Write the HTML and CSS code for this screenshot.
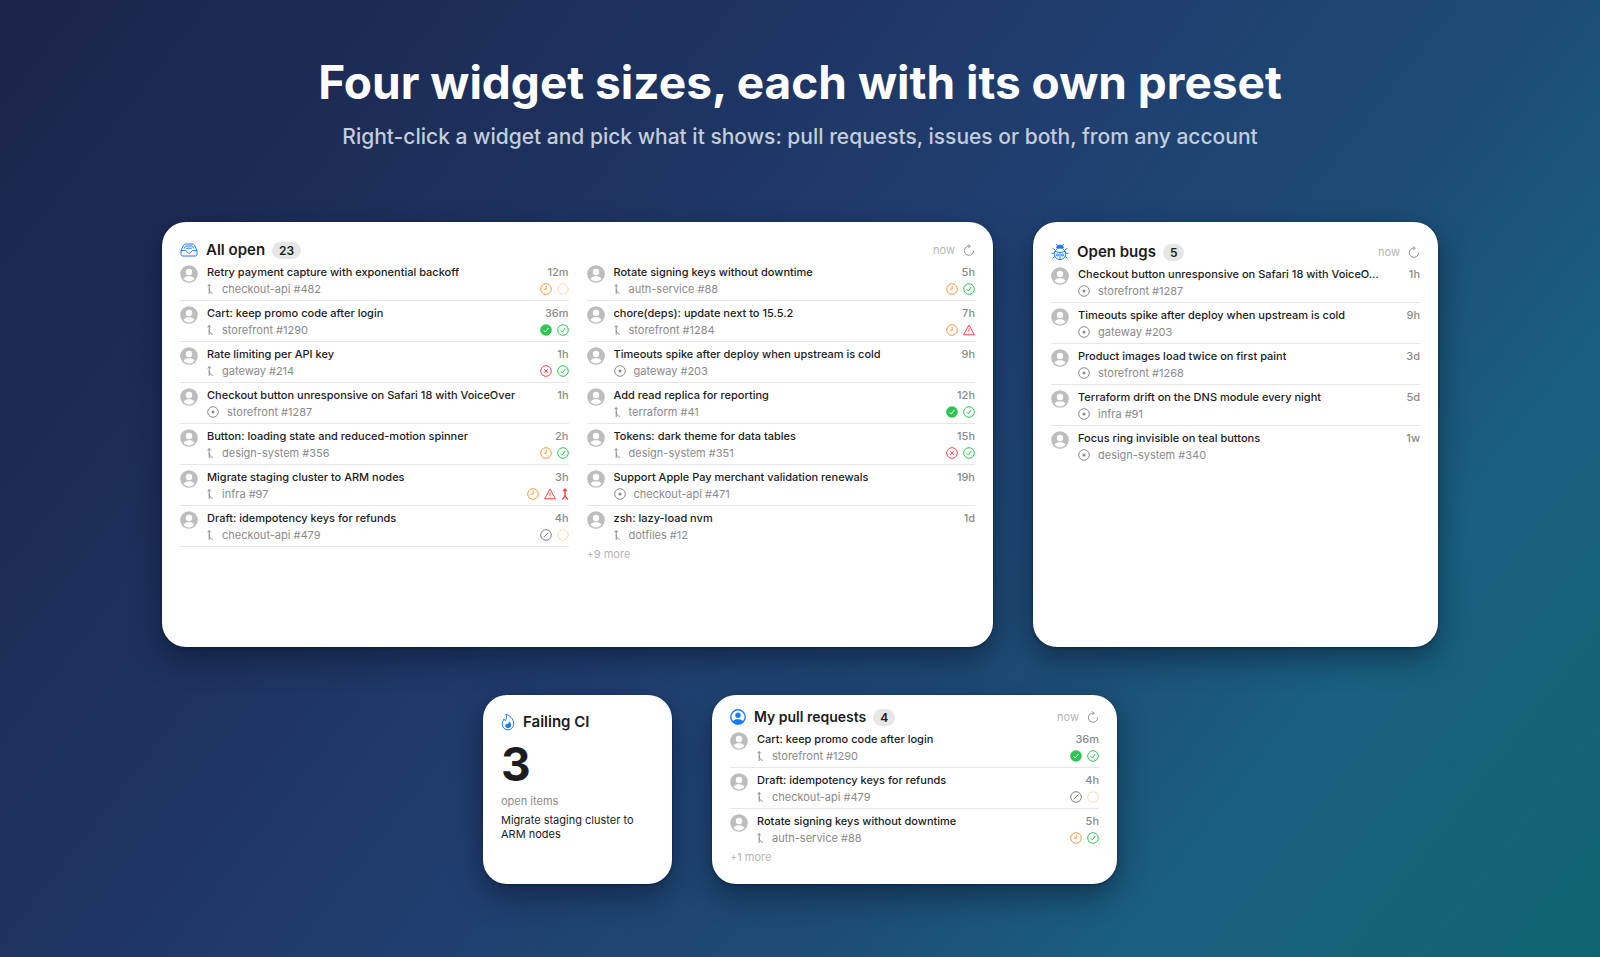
FILE: index.html
```html
<!DOCTYPE html>
<html lang="en">
<head>
  <meta charset="UTF-8">
  <meta name="viewport" content="width=device-width, initial-scale=1">
  <title>Widget sizes</title>
  <link rel="stylesheet" href="styles.css">
</head>
<body>
  <!-- Icon set -->
  <svg class="sprite" aria-hidden="true">
    <symbol id="tray" viewBox="0 0 18 14">
      <path d="M1 7.6 3.2 2.9C3.7 1.6 4.6 1 6 1h6c1.4 0 2.300.6 2.800 1.900L17 7.600v3.400c0 1.300-.7 2-2 2H3c-1.300 0-2-.7-2-2zM1 7.600h4.600c.7 0 .9.400 1.100 1C7 9.700 7.900 10.300 9 10.300s2-.6 2.300-1.700c.2-.6.4-1 1.100-1H17M4.200 5.600l.8-1.800c.2-.6.6-.8 1.200-.8h5.600c.6 0 1 .2 1.200.8l.8 1.800M6.200 5.200h5.600"/>
    </symbol>
    <symbol id="bug" viewBox="0 0 18 18">
      <path d="M5.300.8 6.600 3M12.700.8 11.400 3M3.800 6.800 1.600 5M3.200 10.300H.6M3.900 13.500l-2.200 1.700M14.200 6.800 16.400 5M14.800 10.300h2.600M14.100 13.500l2.200 1.700"/>
      <path class="solid" d="M5 5C5.300 2.900 7 1.700 9 1.700s3.700 1.200 4 3.300z"/>
      <circle cx="9" cy="10.800" r="5.800"/>
      <path d="M4 8.400c3.200 1.300 6.800 1.300 10 0M9 9.400V16"/>
      <circle cx="6.500" cy="12" r="1"/><circle cx="11.500" cy="12" r="1"/>
    </symbol>
    <symbol id="flame" viewBox="0 0 14 18">
      <path d="M4.800 1.200c3.800 1 7.900 4.700 7.900 9.600 0 3.600-2.400 6-5.700 6s-5.700-2.300-5.700-5.600c0-2.200 1-3.800 1.600-5.200.7.400 1.100 1 1.300 1.800C5.800 6 6 3.600 4.800 1.200z"/>
      <path class="solid" d="M7.800 8.600c1.300.9 2.300 2.200 2.300 3.600 0 1.700-1.200 2.800-2.900 2.800s-2.900-1.100-2.900-2.600c0-.9.4-1.500.8-2 .4.200.7.500.8 1C7.200 10.800 7.800 9.900 7.800 8.600z"/>
    </symbol>
    <symbol id="person" viewBox="0 0 16 16">
      <circle cx="8" cy="8" r="7.200"/>
      <circle class="solid" cx="8" cy="6.300" r="2.700"/>
      <path class="solid" d="M2.800 12.400C3.700 10.800 5.600 10.200 8 10.200s4.300.6 5.200 2.200C12 14.200 10 15.100 8 15.100s-4-.9-5.200-2.700z"/>
    </symbol>
    <symbol id="avatar" viewBox="0 0 18 18">
      <circle cx="9" cy="9" r="8.800" fill="#bdbdbd"/>
      <circle cx="9" cy="7" r="3.200" fill="#fff"/>
      <path d="M3.600 13.700C4.700 11.800 6.700 11.200 9 11.200s4.300.6 5.400 2.500C13 15.500 11 16.400 9 16.400s-4-.9-5.400-2.700z" fill="#fff"/>
    </symbol>
    <symbol id="refresh" viewBox="0 0 12 12">
      <path d="M10.600 6.600A4.600 4.600 0 1 1 6.600 2.100M5.200.4 7.200 2.200 5.300 4.200"/>
    </symbol>
    <symbol id="pr" viewBox="0 0 7 12">
      <path d="M2.200 11V1.800M.7 3.300 2.200 1.500l1.500 1.800M2.200 6.200C2.400 8.500 3.500 9.700 5.800 10.400"/>
    </symbol>
    <symbol id="issue" viewBox="0 0 12 12">
      <circle cx="6" cy="6" r="5.300"/><circle class="solid" cx="6" cy="6" r="1.500"/>
    </symbol>
    <symbol id="clock" viewBox="0 0 12 12">
      <circle cx="6" cy="6" r="5.300"/><path d="M6.200 2.800V6.200H3.800"/>
    </symbol>
    <symbol id="ring" viewBox="0 0 12 12">
      <circle cx="6" cy="6" r="5.200" stroke-dasharray="2.900 .4"/>
    </symbol>
    <symbol id="check" viewBox="0 0 12 12">
      <circle cx="6" cy="6" r="5.300"/><path d="M3.800 6.300 5.400 8 8.200 4"/>
    </symbol>
    <symbol id="approved" viewBox="0 0 12 12">
      <circle class="solid" cx="6" cy="6" r="5.800"/><path d="M3.600 6.300 5.300 8 8.400 4" stroke="#fff"/>
    </symbol>
    <symbol id="cross" viewBox="0 0 12 12">
      <circle cx="6" cy="6" r="5.300"/><path d="M4.200 4.200 7.800 7.800M7.800 4.200 4.200 7.800"/>
    </symbol>
    <symbol id="warning" viewBox="0 0 12 12">
      <path d="M6 1 11.400 10.800H.6zM6 4.400V7.600M6 8.800v.8"/>
    </symbol>
    <symbol id="conflict" viewBox="0 0 8 12">
      <path d="M4 7.600V1.200M2.200 3 4 1l1.800 2M1 11.200 2.600 10 4 7.200 5.400 10 7 11.200"/>
    </symbol>
    <symbol id="draft" viewBox="0 0 12 12">
      <circle cx="6" cy="6" r="5.300"/><path d="M3.700 8.300 8.300 3.700"/>
    </symbol>
  </svg>

  <header class="hero">
    <h1>Four widget sizes, each with its own preset</h1>
    <p>Right-click a widget and pick what it shows: pull requests, issues or both, from any account</p>
  </header>

  <main class="widgets">
    <div class="line wide">
      <section class="card extra-large">
        <div class="card-head">
          <svg class="icon tray"><use href="#tray"/></svg>
          <h2>All open</h2>
          <span class="count">23</span>
          <span class="updated">now</span>
          <button class="refresh" aria-label="Refresh"><svg class="icon"><use href="#refresh"/></svg></button>
        </div>
        <div class="columns">
          <ul class="items closed" data-list="left"></ul>
          <div>
            <ul class="items" data-list="right"></ul>
            <p class="more">+9 more</p>
          </div>
        </div>
      </section>

      <section class="card large">
        <div class="card-head">
          <svg class="icon bug"><use href="#bug"/></svg>
          <h2>Open bugs</h2>
          <span class="count">5</span>
          <span class="updated">now</span>
          <button class="refresh" aria-label="Refresh"><svg class="icon"><use href="#refresh"/></svg></button>
        </div>
        <ul class="items" data-list="bugs"></ul>
      </section>
    </div>

    <div class="line">
      <section class="card small">
        <div class="card-head">
          <svg class="icon flame"><use href="#flame"/></svg>
          <h2>Failing CI</h2>
        </div>
        <p class="total">3</p>
        <p class="label">open items</p>
        <p class="latest">Migrate staging cluster to ARM nodes</p>
      </section>

      <section class="card medium">
        <div class="card-head">
          <svg class="icon person"><use href="#person"/></svg>
          <h2>My pull requests</h2>
          <span class="count">4</span>
          <span class="updated">now</span>
          <button class="refresh" aria-label="Refresh"><svg class="icon"><use href="#refresh"/></svg></button>
        </div>
        <ul class="items" data-list="mine"></ul>
        <p class="more">+1 more</p>
      </section>
    </div>
  </main>

  <script>
    // title, repo, age, type, status icons
    const lists = {
      left: [
        ["Retry payment capture with exponential backoff", "checkout-api #482", "12m", "pr", ["clock", "ring"]],
        ["Cart: keep promo code after login", "storefront #1290", "36m", "pr", ["approved", "check"]],
        ["Rate limiting per API key", "gateway #214", "1h", "pr", ["cross", "check"]],
        ["Checkout button unresponsive on Safari 18 with VoiceOver", "storefront #1287", "1h", "issue", []],
        ["Button: loading state and reduced-motion spinner", "design-system #356", "2h", "pr", ["clock", "check"]],
        ["Migrate staging cluster to ARM nodes", "infra #97", "3h", "pr", ["clock", "warning", "conflict"]],
        ["Draft: idempotency keys for refunds", "checkout-api #479", "4h", "pr", ["draft", "ring"]]
      ],
      right: [
        ["Rotate signing keys without downtime", "auth-service #88", "5h", "pr", ["clock", "check"]],
        ["chore(deps): update next to 15.5.2", "storefront #1284", "7h", "pr", ["clock", "warning"]],
        ["Timeouts spike after deploy when upstream is cold", "gateway #203", "9h", "issue", []],
        ["Add read replica for reporting", "terraform #41", "12h", "pr", ["approved", "check"]],
        ["Tokens: dark theme for data tables", "design-system #351", "15h", "pr", ["cross", "check"]],
        ["Support Apple Pay merchant validation renewals", "checkout-api #471", "19h", "issue", []],
        ["zsh: lazy-load nvm", "dotfiles #12", "1d", "pr", []]
      ],
      bugs: [
        ["Checkout button unresponsive on Safari 18 with VoiceO…", "storefront #1287", "1h", "issue", []],
        ["Timeouts spike after deploy when upstream is cold", "gateway #203", "9h", "issue", []],
        ["Product images load twice on first paint", "storefront #1268", "3d", "issue", []],
        ["Terraform drift on the DNS module every night", "infra #91", "5d", "issue", []],
        ["Focus ring invisible on teal buttons", "design-system #340", "1w", "issue", []]
      ],
      mine: [
        ["Cart: keep promo code after login", "storefront #1290", "36m", "pr", ["approved", "check"]],
        ["Draft: idempotency keys for refunds", "checkout-api #479", "4h", "pr", ["draft", "ring"]],
        ["Rotate signing keys without downtime", "auth-service #88", "5h", "pr", ["clock", "check"]]
      ]
    };

    const icon = name => `<svg class="icon ${name}"><use href="#${name}"/></svg>`;

    document.querySelectorAll("[data-list]").forEach(ul => {
      ul.innerHTML = lists[ul.dataset.list].map(([title, repo, age, type, status]) => `<li>
        ${icon("avatar")}
        <div class="body">
          <div class="top"><span class="title">${title}</span><span class="age">${age}</span></div>
          <div class="meta">${icon(type)}<span>${repo}</span><span class="status">${status.map(icon).join("")}</span></div>
        </div>
      </li>`).join("");
    });
  </script>
</body>
</html>
```
FILE: styles.css
```css
* {
  box-sizing: border-box;
}
body {
  margin: 0;
  min-height: 100vh;
  padding: 52px 24px 72px;
  font-family: Inter, "Liberation Sans", sans-serif;
  font-size: 11px;
  line-height: 16px;
  color: #1c1c1e;
  background: linear-gradient(128deg, #1b2449 0%, #1e325f 30%, #203f70 50%, #1d4c74 66%, #1a6080 80%, #10646f 100%);
}
h1, h2, p, ul {
  margin: 0;
  padding: 0;
}
.sprite {
  position: absolute;
  width: 0;
  height: 0;
}

.hero {
  text-align: center;
}
.hero h1 {
  font-size: 46px;
  line-height: 60px;
  font-weight: 700;
  color: #fff;
}
.hero p {
  margin-top: 9px;
  font-size: 21px;
  line-height: 32px;
  font-weight: 500;
  color: #c3cddb;
}

.widgets {
  max-width: 1276px;
  margin: 69px auto 0;
  display: flex;
  flex-direction: column;
  gap: 48px;
}
.line {
  display: flex;
  justify-content: center;
  gap: 40px;
}
.line.wide {
  display: grid;
  grid-template-columns: 831fr 405fr;
}
.card {
  min-width: 0;
  padding: 18px;
  border-radius: 24px;
  background: #fff;
  box-shadow: 0 12px 30px rgba(5, 12, 30, 0.45), 0 1px 3px rgba(5, 12, 30, 0.4);
}
.extra-large {
  min-height: 425px;
}
.large {
  padding-top: 20px;
}
.small {
  width: 189px;
  min-height: 189px;
  padding-top: 17px;
}
.medium {
  width: 405px;
  padding-top: 12px;
}

.card-head {
  display: flex;
  align-items: center;
  height: 20px;
}
.card-head h2 {
  margin-left: 8px;
  font-size: 15px;
  line-height: 20px;
  font-weight: 600;
}
.medium .card-head h2 {
  font-size: 14px;
}
.count {
  margin-left: 7px;
  padding: 0 7px;
  border-radius: 9px;
  background: #e6e6e6;
  font-size: 12px;
  line-height: 17px;
  font-weight: 600;
}
.updated {
  margin-left: auto;
  color: #b4b4b4;
}
.refresh {
  display: flex;
  margin-left: 8px;
  padding: 0;
  border: 0;
  background: none;
  color: #8e8e8e;
}

.icon {
  flex: none;
  width: 12px;
  height: 12px;
  fill: none;
  stroke: currentColor;
  stroke-width: 1;
}
.solid {
  fill: currentColor;
  stroke: none;
}
.tray, .bug, .flame, .person {
  color: #1a7bff;
}
.tray {
  width: 18px;
  height: 14px;
}
.bug {
  width: 18px;
  height: 18px;
}
.flame {
  width: 14px;
  height: 18px;
}
.person {
  width: 16px;
  height: 16px;
  stroke-width: 1.4;
}
.avatar {
  width: 18px;
  height: 18px;
  margin-top: 1px;
  stroke: none;
}
.pr {
  width: 7px;
}
.conflict {
  width: 8px;
  color: #ff3b42;
  stroke-width: 1.3;
}
.clock {
  color: #ff9440;
}
.ring {
  color: #ffd3a3;
}
.check, .approved {
  color: #2dc653;
}
.cross, .warning {
  color: #ff4148;
}
.draft {
  color: #808080;
}

.columns {
  display: grid;
  grid-template-columns: 1fr 1fr;
  gap: 18px;
}
.items {
  list-style: none;
}
.items li {
  display: flex;
  gap: 9px;
  padding: 4px 0 3px;
  border-bottom: 1px solid #e6e6e6;
}
.items:not(.closed) li:last-child {
  border-bottom: 0;
}
.body {
  flex: 1;
  min-width: 0;
}
.top {
  display: flex;
  justify-content: space-between;
  gap: 12px;
}
.title {
  overflow: hidden;
  text-overflow: ellipsis;
  white-space: nowrap;
  font-weight: 500;
}
.age {
  color: #8a8a8a;
  font-weight: 500;
}
.meta {
  display: flex;
  align-items: center;
  gap: 8px;
  margin-top: 1px;
  color: #8a8a8a;
}
.status {
  display: flex;
  gap: 5px;
  margin-left: auto;
}
.more {
  color: #b4b4b4;
}

.total {
  margin-top: 8px;
  font-size: 46px;
  line-height: 48px;
  font-weight: 700;
}
.label {
  margin-top: 5px;
  color: #8a8a8a;
}
.latest {
  margin-top: 4px;
  line-height: 14px;
}
```
